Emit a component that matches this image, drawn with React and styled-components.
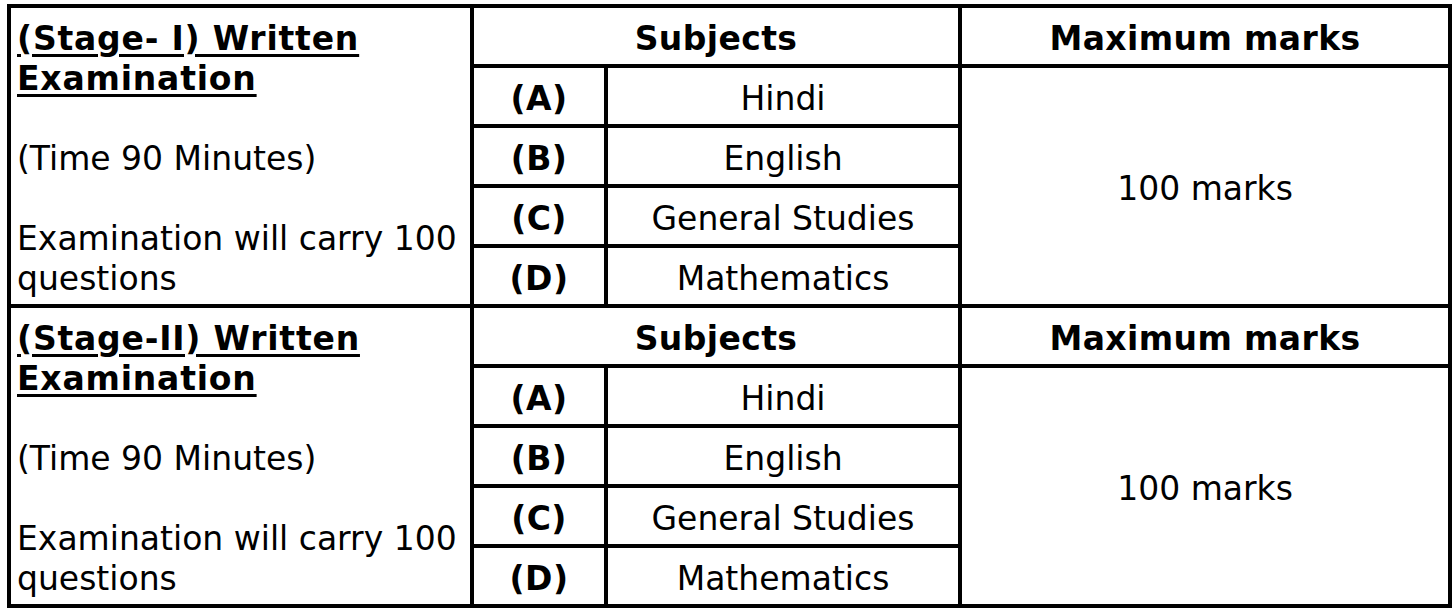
import React from 'react';
import styled, { createGlobalStyle } from 'styled-components';

const GlobalStyles = createGlobalStyle`
  html, body {
    margin: 0;
    padding: 0;
    background: #fff;
  }
  body {
    font-family: "DejaVu Sans", Verdana, sans-serif;
    color: #000;
  }
`;

const Page = styled.div`
  padding: 4px 0 0 7px;
`;

const Table = styled.table`
  border-collapse: separate;
  border-spacing: 0;
  table-layout: fixed;
  width: 1445px;
  border-top: 4px solid #000;
  border-left: 4px solid #000;
  font-size: 33px;
  line-height: 40px;
`;

const Cell = styled.td`
  box-sizing: border-box;
  height: 60px;
  padding: 5px 0 0;
  border-right: 4px solid #000;
  border-bottom: 4px solid #000;
  text-align: center;
  vertical-align: middle;
  font-weight: ${props => (props.bold ? 700 : 400)};
  letter-spacing: ${props => (props.bold ? '0.4px' : '0')};
`;

const StageCell = styled(Cell)`
  text-align: left;
  padding: 5px 0 0 6px;
`;

const StageTitle = styled.div`
  font-weight: 700;
  letter-spacing: 0.8px;
  text-decoration: underline;
  text-decoration-thickness: 3px;
  text-underline-offset: 4px;
  margin-bottom: 40px;
`;

const StageNote = styled.div`
  margin-bottom: ${props => (props.last ? '0' : '40px')};
`;

const subjects = [
  ['(A)', 'Hindi'],
  ['(B)', 'English'],
  ['(C)', 'General Studies'],
  ['(D)', 'Mathematics'],
];

const stages = ['(Stage- I) Written Examination', '(Stage-II) Written Examination'];

function StageRows({ title }) {
  return (
    <>
      <tr>
        <StageCell rowSpan={5}>
          <StageTitle>{title}</StageTitle>
          <StageNote>(Time 90 Minutes)</StageNote>
          <StageNote last>Examination will carry 100 questions</StageNote>
        </StageCell>
        <Cell bold colSpan={2}>Subjects</Cell>
        <Cell bold>Maximum marks</Cell>
      </tr>
      {subjects.map(([letter, name], i) => (
        <tr key={letter}>
          <Cell bold>{letter}</Cell>
          <Cell>{name}</Cell>
          {i === 0 ? <Cell rowSpan={4}>100 marks</Cell> : null}
        </tr>
      ))}
    </>
  );
}

export default function App() {
  return (
    <>
      <GlobalStyles />
      <Page>
        <Table>
          <colgroup>
            <col style={{ width: 463 }} />
            <col style={{ width: 134 }} />
            <col style={{ width: 354 }} />
            <col style={{ width: 490 }} />
          </colgroup>
          <tbody>
            {stages.map(title => (
              <StageRows key={title} title={title} />
            ))}
          </tbody>
        </Table>
      </Page>
    </>
  );
}
